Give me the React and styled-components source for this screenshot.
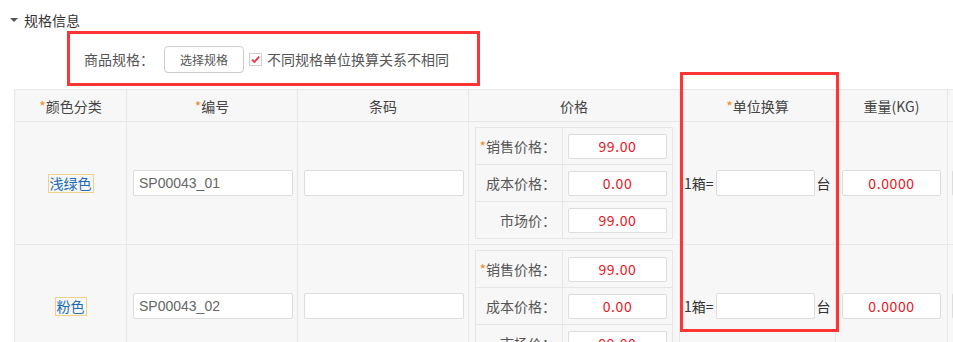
import React from 'react';
import styled, { createGlobalStyle } from 'styled-components';

const GlobalStyle = createGlobalStyle`
  html, body { margin: 0; padding: 0; background: #fff; overflow: hidden; }
  body {
    font-family: "Noto Sans CJK SC", "Microsoft YaHei", sans-serif;
    font-size: 14px;
    color: #333;
  }
  * { box-sizing: border-box; }
`;

const Page = styled.div`
  position: relative;
  width: 953px;
  height: 342px;
  overflow: hidden;
  padding-top: 9px;
`;

const Heading = styled.div`
  display: flex;
  align-items: center;
  gap: 6px;
  height: 22px;
  padding-left: 10px;
  font-size: 14px;
  color: #333;
`;

const Caret = styled.span`
  width: 0;
  height: 0;
  border-left: 4px solid transparent;
  border-right: 4px solid transparent;
  border-top: 4px solid #555;
`;

const SpecBox = styled.div`
  margin-left: 67px;
  width: 413px;
  height: 55px;
  border: 3px solid #ff3535;
  display: flex;
  align-items: center;
  padding-left: 14px;
  padding-top: 1px;
  color: #555;
`;

const SpecLabel = styled.span`
  margin-right: 10px;
  font-size: 14px;
`;

const SelectButton = styled.button`
  width: 80px;
  height: 27px;
  border: 1px solid #ccc;
  border-radius: 4px;
  background: #fff;
  color: #555;
  font-family: "Noto Sans CJK SC", sans-serif;
  font-size: 12px;
  padding: 0;
  margin-right: 5px;
`;

const CheckLabel = styled.label`
  display: flex;
  align-items: center;
  gap: 5px;
  font-size: 14px;
  color: #555;
`;

const CheckBoxIcon = styled.svg`
  width: 13px;
  height: 13px;
  display: block;
`;

const Table = styled.table`
  margin-top: 3px;
  margin-left: 14px;
  border-collapse: collapse;
  table-layout: fixed;
  width: 1140px;
  background: #f7f7f7;
`;

const HeadCell = styled.th`
  height: 32px;
  padding: 0;
  border: 1px solid #e8e8e8;
  font-weight: normal;
  font-size: 14px;
  color: #444;
  text-align: center;
  vertical-align: middle;
`;

const Cell = styled.td`
  height: 123px;
  padding: 0 0 0 ${p => p.$pl ?? 6}px;
  border: 1px solid #e8e8e8;
  text-align: ${p => p.$align || 'left'};
  vertical-align: middle;
`;

const Star = styled.span`
  color: #f0892b;
`;

const Tag = styled.span`
  display: inline-block;
  border: 1px solid #f0d18c;
  color: #1a6cb5;
  font-size: 14px;
  line-height: 17px;
  padding: 0 1px;
`;

const TextInput = styled.input`
  display: block;
  width: ${p => p.$w || 160}px;
  height: 26px;
  border: 1px solid #ddd;
  border-radius: 2px;
  background: #fff;
  padding: 0 5px;
  font-family: "Liberation Sans", Arial, sans-serif;
  font-size: 14px;
  color: #666;
  outline: none;
`;

const NumInput = styled.input`
  display: block;
  width: 99px;
  height: ${p => p.$h || 25}px;
  border: 1px solid #ddd;
  border-radius: 2px;
  background: #fff;
  padding: 0;
  text-align: center;
  font-family: "Noto Sans CJK SC", sans-serif;
  font-size: 14px;
  letter-spacing: 0.6px;
  color: #e8141e;
  outline: none;
`;

const PriceTable = styled.table`
  border-collapse: collapse;
  table-layout: fixed;
  width: 198px;
`;

const PriceLabel = styled.td`
  width: 87px;
  height: 37px;
  padding: 0 6px 0 0;
  border: 1px solid #e6e6e6;
  text-align: right;
  font-size: 14px;
  color: #555;
  vertical-align: middle;
`;

const PriceValue = styled.td`
  height: 37px;
  padding: 0 0 0 5px;
  border: 1px solid #e6e6e6;
  vertical-align: middle;
`;

const UnitRow = styled.div`
  display: flex;
  align-items: center;
  font-size: 14px;
  color: #333;
  gap: 2px;
`;

const Highlight = styled.div`
  position: absolute;
  left: 680px;
  top: 72px;
  width: 159px;
  height: 260px;
  border: 3px solid #ff3535;
  pointer-events: none;
`;

const Check = () => (
  <CheckBoxIcon viewBox="0 0 13 13">
    <rect x="0.5" y="0.5" width="12" height="12" fill="#fff" stroke="#cfcfcf" />
    <path d="M3 6.6 L5.4 9 L10.2 3.6" fill="none" stroke="#e8343c" strokeWidth="1.8" />
  </CheckBoxIcon>
);

const prices = [
  { label: '销售价格：', value: '99.00', required: true },
  { label: '成本价格：', value: '0.00' },
  { label: '市场价：', value: '99.00' },
];

const PriceBlock = () => (
  <PriceTable>
    <tbody>
      {prices.map(p => (
        <tr key={p.label}>
          <PriceLabel>
            {p.required && <Star>*</Star>}
            {p.label}
          </PriceLabel>
          <PriceValue>
            <NumInput readOnly value={p.value} />
          </PriceValue>
        </tr>
      ))}
    </tbody>
  </PriceTable>
);

const rows = [
  { color: '浅绿色', code: 'SP00043_01' },
  { color: '粉色', code: 'SP00043_02' },
];

export default function App() {
  return (
    <>
      <GlobalStyle />
      <Page>
        <Heading>
          <Caret />
          规格信息
        </Heading>
        <SpecBox>
          <SpecLabel>商品规格：</SpecLabel>
          <SelectButton>选择规格</SelectButton>
          <CheckLabel>
            <Check />
            不同规格单位换算关系不相同
          </CheckLabel>
        </SpecBox>
        <Table>
          <colgroup>
            <col style={{ width: 112 }} />
            <col style={{ width: 171 }} />
            <col style={{ width: 171 }} />
            <col style={{ width: 211 }} />
            <col style={{ width: 156 }} />
            <col style={{ width: 112 }} />
            <col style={{ width: 207 }} />
          </colgroup>
          <thead>
            <tr>
              <HeadCell><Star>*</Star>颜色分类</HeadCell>
              <HeadCell><Star>*</Star>编号</HeadCell>
              <HeadCell>条码</HeadCell>
              <HeadCell>价格</HeadCell>
              <HeadCell><Star>*</Star>单位换算</HeadCell>
              <HeadCell>重量(KG)</HeadCell>
              <HeadCell></HeadCell>
            </tr>
          </thead>
          <tbody>
            {rows.map(r => (
              <tr key={r.code}>
                <Cell $align="center" $pl={0}><Tag>{r.color}</Tag></Cell>
                <Cell><TextInput readOnly value={r.code} /></Cell>
                <Cell><TextInput readOnly value="" /></Cell>
                <Cell><PriceBlock /></Cell>
                <Cell $pl={4}>
                  <UnitRow>
                    1箱=
                    <NumInput $h={26} readOnly value="" />
                    台
                  </UnitRow>
                </Cell>
                <Cell><NumInput $h={26} readOnly value="0.0000" /></Cell>
                <Cell $pl={4}><TextInput $w={100} readOnly value="" /></Cell>
              </tr>
            ))}
          </tbody>
        </Table>
        <Highlight />
      </Page>
    </>
  );
}
